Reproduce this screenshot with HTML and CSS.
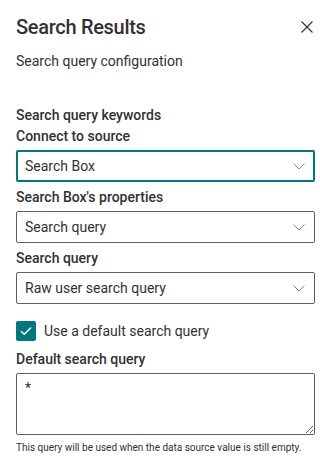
FILE: index.html
```html
<!DOCTYPE html>
<html lang="en">
<head>
<meta charset="utf-8">
<title>Search Results</title>
<link rel="stylesheet" href="styles.css">
</head>
<body>
<div class="panel">
  <div class="header">
    <h1 class="title">Search Results</h1>
    <button class="close" aria-label="Close">
      <svg width="12" height="12" viewBox="0 0 12 12"><path d="M0.5 0.5 L11.5 11.5 M11.5 0.5 L0.5 11.5" stroke="#323130" stroke-width="1.1" fill="none"/></svg>
    </button>
  </div>
  <p class="subtitle">Search query configuration</p>

  <div class="group-title">Search query keywords</div>

  <label class="label">Connect to source</label>
  <div class="dropdown focused">
    <span class="dd-text">Search Box</span>
    <svg class="chev" width="12" height="7" viewBox="0 0 12 7"><path d="M0.5 0.5 L6 6 L11.5 0.5" stroke="#8a8886" stroke-width="1" fill="none"/></svg>
  </div>

  <label class="label">Search Box's properties</label>
  <div class="dropdown">
    <span class="dd-text">Search query</span>
    <svg class="chev" width="12" height="7" viewBox="0 0 12 7"><path d="M0.5 0.5 L6 6 L11.5 0.5" stroke="#8a8886" stroke-width="1" fill="none"/></svg>
  </div>

  <label class="label">Search query</label>
  <div class="dropdown">
    <span class="dd-text">Raw user search query</span>
    <svg class="chev" width="12" height="7" viewBox="0 0 12 7"><path d="M0.5 0.5 L6 6 L11.5 0.5" stroke="#8a8886" stroke-width="1" fill="none"/></svg>
  </div>

  <div class="checkrow">
    <span class="checkbox">
      <svg width="12" height="10" viewBox="0 0 12 10"><path d="M1 5.2 L4.3 8.3 L11 1.5" stroke="#ffffff" stroke-width="1.4" fill="none"/></svg>
    </span>
    <span class="check-text">Use a default search query</span>
  </div>

  <label class="label">Default search query</label>
  <textarea class="textarea">*</textarea>
  <p class="help">This query will be used when the data source value is still empty.</p>
</div>
</body>
</html>
```

FILE: styles.css
```css
* { box-sizing: border-box; }
html, body { margin: 0; padding: 0; background: #ffffff; }
body {
  font-family: Roboto, "Noto Sans", sans-serif;
  color: #323130;
  width: 320px;
  height: 456px;
  overflow: hidden;
}
.panel {
  padding: 0 5px 0 16px;
  display: flex;
  flex-direction: column;
}
.header {
  display: flex;
  justify-content: space-between;
  align-items: flex-start;
  padding-top: 13px;
}
.title {
  margin: 0;
  font-size: 20px;
  font-weight: 500;
  line-height: 28px;
  letter-spacing: -0.3px;
}
.close {
  border: 0;
  background: transparent;
  padding: 0;
  margin: 8px 2px 0 0;
  width: 12px;
  height: 12px;
  display: flex;
}
.subtitle {
  margin: 10px 0 0;
  font-size: 14px;
  line-height: 20px;
}
.group-title {
  margin-top: 34px;
  font-size: 14px;
  font-weight: 500;
  line-height: 20px;
}
.label {
  display: block;
  font-size: 14px;
  font-weight: 500;
  line-height: 20px;
  padding: 5px 0 4px;
}
.group-title + .label { margin-top: -4px; }
.dropdown {
  height: 32px;
  border: 1px solid #605e5c;
  border-radius: 2px;
  display: flex;
  align-items: center;
  justify-content: space-between;
  padding: 0 8px 0 8px;
  font-size: 14px;
}
.dropdown.focused {
  border: 2px solid #03787c;
  padding: 0 7px 0 7px;
}
.dd-text { line-height: 20px; }
.chev { margin-right: 1px; }
.checkrow {
  display: flex;
  align-items: center;
  gap: 8px;
  margin-top: 17px;
}
.checkbox {
  width: 20px;
  height: 20px;
  border-radius: 2px;
  background: #03787c;
  display: flex;
  align-items: center;
  justify-content: center;
}
.check-text {
  font-size: 14px;
  line-height: 20px;
}
.checkrow + .label { margin-top: 3px; }
.textarea {
  display: block;
  width: 100%;
  height: 62px;
  border: 1px solid #605e5c;
  border-radius: 2px;
  padding: 6px 8px;
  font-family: Roboto, "Noto Sans", sans-serif;
  font-size: 14px;
  line-height: 17px;
  color: #323130;
  resize: both;
  margin: 0;
}
.help {
  margin: 6px 0 0;
  font-size: 10px;
  line-height: 14px;
}
```
